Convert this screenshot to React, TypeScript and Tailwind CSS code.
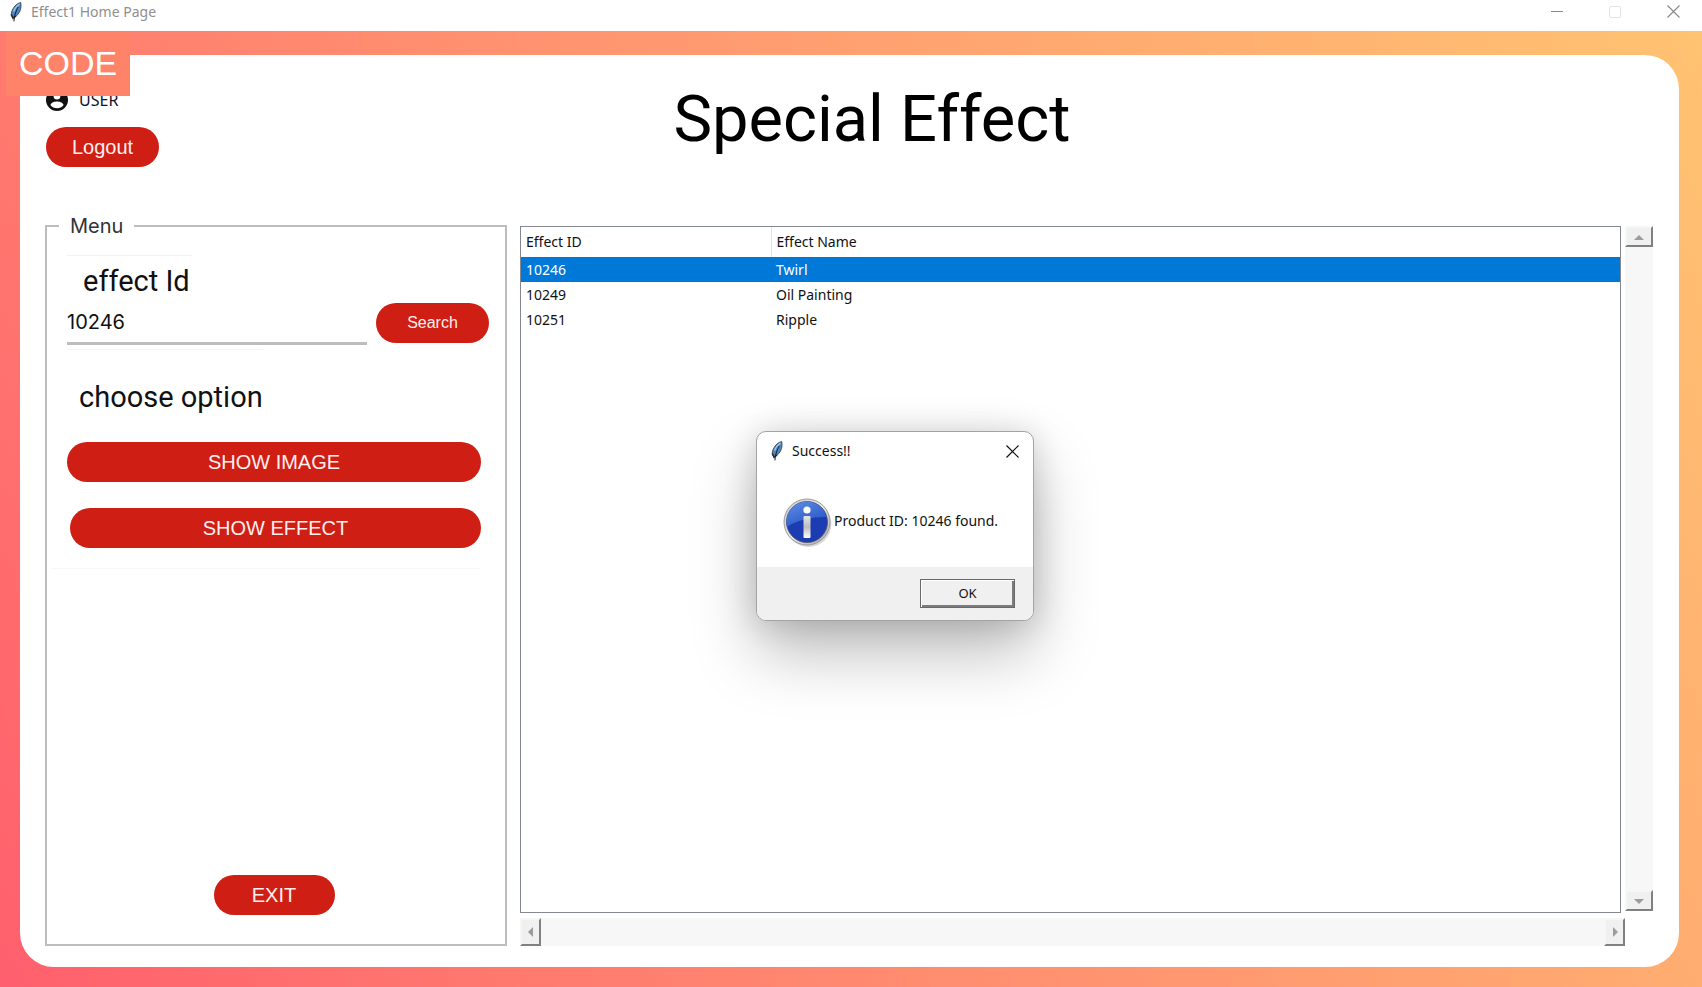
import React from "react";

const effects = [
  { id: "10246", name: "Twirl" },
  { id: "10249", name: "Oil Painting" },
  { id: "10251", name: "Ripple" },
];

function Feather({ className = "" }: { className?: string }) {
  return (
    <svg viewBox="0 0 12 20" className={`h-5 w-3 shrink-0 ${className}`} aria-hidden="true">
      <path
        d="M10.8 0.6C8 1 5 3.2 3.2 6.4 1.800 8.6 1 11.600 1.300 13.600L2.600 15.400 5.600 14.600C8.500 12.600 10.800 8.600 11 4.600Z"
        fill="#4d87c2"
        stroke="#3a4350"
        strokeWidth="0.900"
      />
      <path d="M9.600 2C7 3.600 4.800 6.400 3.600 9.600" fill="none" stroke="#9fcbf2" strokeWidth="1.300" />
      <path d="M8.200 5C6.200 8.600 4.600 12.400 3.900 19.400" fill="none" stroke="#15191f" strokeWidth="1" />
      <path d="M1.400 12.500L3 16.300L6 14" fill="none" stroke="#23262c" strokeWidth="1.400" />
    </svg>
  );
}

function CloseGlyph({ className = "" }: { className?: string }) {
  return (
    <svg viewBox="0 0 13 13" className={`size-[13px] ${className}`} fill="none" stroke="currentColor" strokeWidth="1.2" aria-hidden="true">
      <path d="M0.500 0.500L12.500 12.500M12.500 0.500L0.500 12.500" />
    </svg>
  );
}

function InfoIcon() {
  return (
    <svg viewBox="0 0 49 50" className="h-[50px] w-[49px] shrink-0" aria-hidden="true">
      <defs>
        <linearGradient id="ring" x1="0" y1="0" x2="1" y2="1">
          <stop offset="0" stopColor="#c9c9c9" />
          <stop offset="0.500" stopColor="#e8e8e8" />
          <stop offset="1" stopColor="#9d9d9d" />
        </linearGradient>
        <linearGradient id="gloss" x1="0" y1="0" x2="0.600" y2="1">
          <stop offset="0" stopColor="#5f8fe8" />
          <stop offset="1" stopColor="#2a55c4" />
        </linearGradient>
        <linearGradient id="stem" x1="0" y1="0" x2="0" y2="1">
          <stop offset="0" stopColor="#e6e6e6" />
          <stop offset="0.500" stopColor="#bcbcbc" />
          <stop offset="1" stopColor="#ffffff" />
        </linearGradient>
      </defs>
      <circle cx="25.500" cy="26" r="23" fill="#000" opacity="0.150" />
      <circle cx="24" cy="24" r="23" fill="url(#ring)" stroke="#9a9a9a" strokeWidth="1" />
      <circle cx="24" cy="24" r="20.500" fill="#1c3cb4" stroke="#4a4f66" strokeWidth="0.800" />
      <path d="M4 29A20 20 0 0 1 43.500 19C34 18.500 14 21 4 29Z" fill="url(#gloss)" />
      <circle cx="24" cy="12" r="3.600" fill="#fff" />
      <rect x="20.500" y="18" width="7" height="22" rx="1" fill="url(#stem)" />
    </svg>
  );
}

function Pill({ className, children }: { className: string; children: React.ReactNode }) {
  return (
    <button type="button" className={`flex h-10 items-center justify-center rounded-full bg-[#cf1e14] text-[#ffeeee] ${className}`}>
      {children}
    </button>
  );
}

function ScrollButton({ label, path, className }: { label: string; path: string; className: string }) {
  return (
    <button
      type="button"
      aria-label={label}
      className={`flex items-center justify-center border-2 border-t-[#f6f6f6] border-l-[#f6f6f6] border-r-[#808080] border-b-[#808080] bg-[#f0f0f0] ${className}`}
    >
      <svg viewBox="0 0 10 10" className="size-[10px]" aria-hidden="true">
        <path d={path} fill="#9c9c9c" />
      </svg>
    </button>
  );
}

export default function App() {
  return (
    <div className="relative flex min-h-screen flex-col bg-white font-['Liberation_Sans',Arial,sans-serif]">
      <div className="flex h-[31px] items-start justify-between pr-[22px] pl-[10px]">
        <div className="flex h-[23px] items-center gap-[9px]">
          <Feather />
          <span className="font-['Noto_Sans',sans-serif] text-sm text-[#8f8f8f]">Effect1 Home Page</span>
        </div>
        <div className="flex h-[23px] items-center gap-[46px] text-[#8a8a8a]">
          <button type="button" aria-label="Minimize" className="flex size-3 items-center">
            <span className="block h-px w-3 bg-[#8a8a8a]" />
          </button>
          <button type="button" aria-label="Maximize" className="size-3 rounded-[2px] border border-[#e4e4e4]" />
          <button type="button" aria-label="Close">
            <CloseGlyph />
          </button>
        </div>
      </div>

      <div className="relative flex flex-1 flex-col bg-linear-60 from-[#ff5f6d] to-[#ffc371] pt-6 pr-[23px] pb-5 pl-5">
        <div className="absolute top-0 left-[6px] flex h-[65px] w-[124px] items-center justify-center bg-[#ff8369] text-[34px] text-white">
          CODE
        </div>

        <div className="flex flex-1 flex-col rounded-[34px] bg-white pr-[26px] pb-[21px] pl-[25px]">
          <header className="flex h-[156px] items-start pr-[68px]">
            <div className="flex flex-col gap-4 pt-[34px] pl-px">
              <div className="flex h-[22px] items-center gap-[11px] font-['Noto_Sans',sans-serif] text-base text-[#15152a]">
                <svg viewBox="0 0 20 20" className="size-[22px]" aria-hidden="true">
                  <circle cx="10" cy="10" r="10" fill="#111" />
                  <circle cx="10" cy="6.500" r="3" fill="#fff" />
                  <path d="M4 14.500C5 11.800 8 11.300 10 11.300S15 11.800 16 14.500C14.500 16.500 12.300 17.400 10 17.400S5.500 16.500 4 14.500Z" fill="#fff" />
                </svg>
                USER
              </div>
              <Pill className="w-[113px] text-xl">Logout</Pill>
            </div>
            <h1 className="flex-1 pt-[25px] text-center font-['Roboto',sans-serif] text-[65px] leading-[78px] text-black">Special Effect</h1>
          </header>

          <main className="flex flex-1 gap-[13px]">
            <fieldset className="flex w-[462px] min-w-0 shrink-0 flex-col border-2 border-[#bdbdbd] pr-[24px] pb-[29px] pl-5">
              <legend className="-ml-2 h-[30px] px-[11px] font-['Inter',sans-serif] text-xl leading-[30px] text-[#333]">Menu</legend>
              <div className="flex h-full flex-col pt-[14px]">
                <label htmlFor="effect-id" className="h-12 w-[125px] border-t border-[#f3f3f3] pl-4 font-['Roboto',sans-serif] text-[29px] leading-[50px] whitespace-nowrap text-[#111]">
                  effect Id
                </label>
                <div className="-mr-2 flex items-start gap-[9px]">
                  <input
                    id="effect-id"
                    defaultValue="10246"
                    className="h-[42px] w-full min-w-0 flex-1 border-b-3 border-[#bdbdbd] bg-transparent pb-px font-['Inter',sans-serif] text-xl text-[#111] outline-none"
                  />
                  <Pill className="w-[113px] shrink-0 text-base">Search</Pill>
                </div>
                <h2 className="mt-1 h-[72px] w-fit border-t border-[#f6f6f6] pt-[22px] pl-3 font-['Roboto',sans-serif] text-[29px] leading-[50px] text-[#111]">
                  choose option
                </h2>
                <Pill className="mt-[21px] w-full text-xl">SHOW IMAGE</Pill>
                <Pill className="mt-[26px] ml-[3px] text-xl">SHOW EFFECT</Pill>
                <hr className="mt-5 -ml-4 border-[#f8f8f8]" />
                <Pill className="mt-auto w-[121px] self-center text-xl">EXIT</Pill>
              </div>
            </fieldset>

            <section className="mt-[15px] flex flex-1 flex-col gap-[5px]">
              <div className="flex flex-1 gap-1">
                <div className="flex-1 border border-[#828790] bg-white">
                  <table className="w-full table-fixed border-collapse text-left font-['Noto_Sans',sans-serif] text-sm text-[#111]">
                    <thead>
                      <tr className="h-[30px]">
                        <th className="w-[250px] border-r border-[#e2e2e2] pl-[5px] font-normal">Effect ID</th>
                        <th className="pl-[5px] font-normal">Effect Name</th>
                      </tr>
                    </thead>
                    <tbody>
                      {effects.map((effect, i) => (
                        <tr key={effect.id} className={i === 0 ? "h-[25px] bg-[#0078d7] text-white" : "h-[25px]"}>
                          <td className="pl-[5px]">{effect.id}</td>
                          <td className="pl-[5px]">{effect.name}</td>
                        </tr>
                      ))}
                    </tbody>
                  </table>
                </div>
                <div className="mb-[2px] flex w-7 flex-col justify-between bg-[#f7f7f7]">
                  <ScrollButton label="Scroll up" path="M0 8L5 3L10 8Z" className="h-[21px] w-7" />
                  <ScrollButton label="Scroll down" path="M0 3L5 8L10 3Z" className="h-[21px] w-7" />
                </div>
              </div>
              <div className="mr-7 flex h-7 justify-between bg-[#f7f7f7]">
                <ScrollButton label="Scroll left" path="M7 0L2 5L7 10Z" className="h-7 w-[21px]" />
                <ScrollButton label="Scroll right" path="M3 0L8 5L3 10Z" className="h-7 w-[21px]" />
              </div>
            </section>
          </main>
        </div>
      </div>

      <div
        role="dialog"
        aria-labelledby="dialog-title"
        className="absolute top-[431px] left-[756px] flex h-[190px] w-[278px] flex-col overflow-hidden rounded-[10px] border border-[#a3a3a3] bg-white font-['Noto_Sans',sans-serif] text-sm text-[#111] shadow-[0_32px_64px_rgba(0,0,0,0.26),0_2px_32px_rgba(0,0,0,0.16)]"
      >
        <div className="flex h-[38px] items-center justify-between pr-[14px] pl-[14px]">
          <div className="flex items-center gap-[9px]">
            <Feather />
            <span id="dialog-title">Success!!</span>
          </div>
          <button type="button" aria-label="Close dialog">
            <CloseGlyph />
          </button>
        </div>
        <div className="flex flex-1 items-center gap-[2px] pt-[9px] pl-[26px]">
          <InfoIcon />
          <p className="pb-1">Product ID: 10246 found.</p>
        </div>
        <div className="flex h-[53px] items-center justify-end bg-[#f0f0f0] pr-[18px]">
          <button type="button" className="h-[29px] w-[95px] border border-[#696969] bg-[#f0f0f0] text-[13px] shadow-[inset_1px_1px_0_#fff,inset_-2px_-2px_0_#7c7c7c]">
            OK
          </button>
        </div>
      </div>
    </div>
  );
}
